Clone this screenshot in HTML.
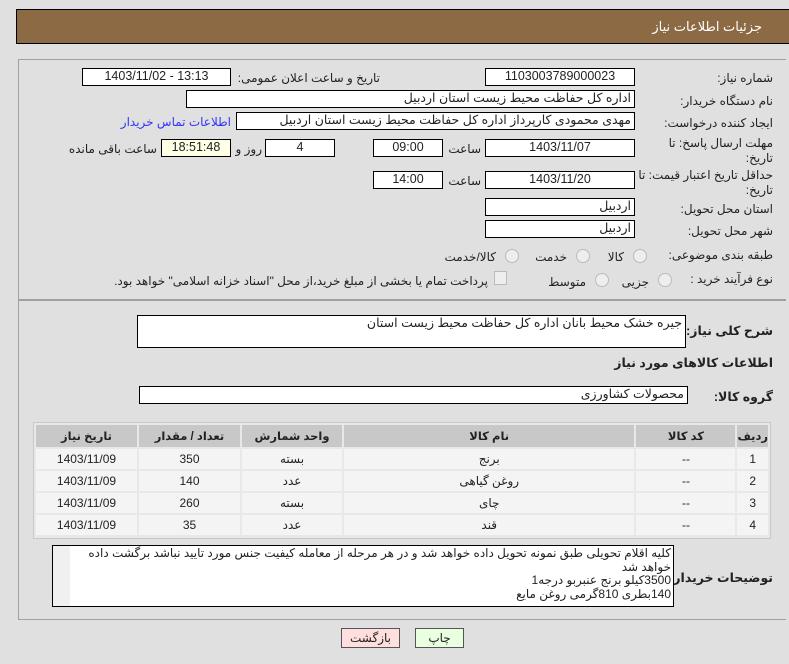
<!DOCTYPE html>
<html><head><meta charset="utf-8"><style>
body{margin:0;width:789px;height:664px;background:#e0e0e0;font-family:"Liberation Sans","DejaVu Sans",sans-serif;font-size:12px;color:#222;position:relative;overflow:hidden}
.a{position:absolute}
.box{position:absolute;background:#fff;border:1px solid #000;box-sizing:border-box;font-size:12.5px;line-height:15px;white-space:nowrap;overflow:hidden}
.c{text-align:center}.r{text-align:right;padding-right:3px;direction:rtl}
.l{position:absolute;direction:rtl;text-align:right;white-space:nowrap;font-size:12px}
table{border-collapse:separate;border-spacing:2px;font-size:12px}
td,th{text-align:center;height:20px;padding:0}
th{background:#c8c8c8;height:22px;font-weight:bold;font-size:11.5px}
td{background:#f4f4f4}
.rad{position:absolute;width:12px;height:12px;border:1px solid #bbb;border-radius:50%;background:#eee}
</style></head><body>
<div class="a" style="left:16px;top:9px;width:775px;height:35px;background:#8c6a43;border:1px solid #000;box-sizing:border-box"></div>
<div class="l" style="right:27px;top:19px;color:#fff;font-size:13px">جزئیات اطلاعات نیاز</div>
<div class="a" style="left:18px;top:59px;width:767px;height:239px;border:1px solid #a0a0a0;border-right:none"></div>
<div class="a" style="left:18px;top:300px;width:767px;height:318px;border:1px solid #a0a0a0;border-right:none"></div>

<div class="l" style="right:16px;top:71px">شماره نیاز:</div>
<div class="box c" style="left:485px;top:68px;width:150px;height:18px">1103003789000023</div>
<div class="l" style="right:409px;top:71px">تاریخ و ساعت اعلان عمومی:</div>
<div class="box c" style="left:82px;top:68px;width:149px;height:18px">1403/11/02 - 13:13</div>

<div class="l" style="right:16px;top:94px">نام دستگاه خریدار:</div>
<div class="box r" style="left:186px;top:90px;width:449px;height:18px">اداره کل حفاظت محیط زیست استان اردبیل</div>

<div class="l" style="right:16px;top:116px">ایجاد کننده درخواست:</div>
<div class="box r" style="left:236px;top:112px;width:399px;height:18px">مهدی محمودی کارپرداز اداره کل حفاظت محیط زیست استان اردبیل</div>
<div class="l" style="right:558px;top:115px;color:#3333ff">اطلاعات تماس خریدار</div>

<div class="l" style="right:16px;top:136px;line-height:15px">مهلت ارسال پاسخ: تا<br>تاریخ:</div>
<div class="box c" style="left:485px;top:139px;width:150px;height:18px">1403/11/07</div>
<div class="l" style="right:308px;top:142px">ساعت</div>
<div class="box c" style="left:373px;top:139px;width:70px;height:18px">09:00</div>
<div class="box c" style="left:265px;top:139px;width:70px;height:18px">4</div>
<div class="l" style="right:527px;top:142px">روز و</div>
<div class="box c" style="left:161px;top:139px;width:70px;height:18px;background:#ffffe6">18:51:48</div>
<div class="l" style="right:632px;top:142px">ساعت باقی مانده</div>

<div class="l" style="right:16px;top:168px;line-height:15px">حداقل تاریخ اعتبار قیمت: تا<br>تاریخ:</div>
<div class="box c" style="left:485px;top:171px;width:150px;height:18px">1403/11/20</div>
<div class="l" style="right:308px;top:174px">ساعت</div>
<div class="box c" style="left:373px;top:171px;width:70px;height:18px">14:00</div>

<div class="l" style="right:16px;top:202px">استان محل تحویل:</div>
<div class="box r" style="left:485px;top:198px;width:150px;height:18px">اردبیل</div>
<div class="l" style="right:16px;top:224px">شهر محل تحویل:</div>
<div class="box r" style="left:485px;top:220px;width:150px;height:18px">اردبیل</div>

<div class="l" style="right:16px;top:248px">طبقه بندی موضوعی:</div>
<div class="rad" style="left:633px;top:249px"></div><div class="l" style="right:165px;top:250px">کالا</div>
<div class="rad" style="left:576px;top:249px"></div><div class="l" style="right:222px;top:250px">خدمت</div>
<div class="rad" style="left:505px;top:249px"></div><div class="l" style="right:293px;top:250px">کالا/خدمت</div>

<div class="l" style="right:16px;top:272px">نوع فرآیند خرید :</div>
<div class="rad" style="left:658px;top:273px"></div><div class="l" style="right:140px;top:275px">جزیی</div>
<div class="rad" style="left:595px;top:273px"></div><div class="l" style="right:203px;top:275px">متوسط</div>
<div class="a" style="left:494px;top:271px;width:11px;height:12px;border:1px solid #bbb;background:#eee"></div>
<div class="l" style="right:301px;top:274px">پرداخت تمام یا بخشی از مبلغ خرید،از محل "اسناد خزانه اسلامی" خواهد بود.</div>

<div class="l" style="right:16px;top:323px;font-weight:bold;font-size:12.5px">شرح کلی نیاز:</div>
<div class="box r" style="left:137px;top:315px;width:549px;height:33px">جیره خشک محیط بانان اداره کل حفاظت محیط زیست استان</div>
<div class="l" style="right:16px;top:355px;font-weight:bold;font-size:12.5px">اطلاعات کالاهای مورد نیاز</div>
<div class="l" style="right:16px;top:389px;font-weight:bold;font-size:12.5px">گروه کالا:</div>
<div class="box r" style="left:139px;top:386px;width:549px;height:18px">محصولات کشاورزی</div>

<div class="a" style="left:33px;top:422px;width:738px;height:117px;border:1px solid #c8c8c8;box-sizing:border-box;background:#e8e8e8">
<table dir="rtl" style="width:100%">
<tr><th style="width:27px">ردیف</th><th style="width:99px">کد کالا</th><th>نام کالا</th><th style="width:100px">واحد شمارش</th><th style="width:101px">تعداد / مقدار</th><th style="width:101px">تاریخ نیاز</th></tr>
<tr><td>1</td><td>--</td><td>برنج</td><td>بسته</td><td>350</td><td>1403/11/09</td></tr>
<tr><td>2</td><td>--</td><td>روغن گیاهی</td><td>عدد</td><td>140</td><td>1403/11/09</td></tr>
<tr><td>3</td><td>--</td><td>چای</td><td>بسته</td><td>260</td><td>1403/11/09</td></tr>
<tr><td>4</td><td>--</td><td>قند</td><td>عدد</td><td>35</td><td>1403/11/09</td></tr>
</table></div>

<div class="l" style="right:16px;top:570px;font-weight:bold;font-size:12.5px">توضیحات خریدار:</div>
<div class="box" style="left:52px;top:545px;width:622px;height:62px;white-space:normal">
<div style="position:absolute;left:0;top:0;width:17px;height:60px;background:#f0f0f0"></div>
<div style="position:absolute;right:2px;left:19px;top:1px;direction:rtl;text-align:right;font-size:12px;line-height:13.5px">کلیه اقلام تحویلی طبق نمونه تحویل داده خواهد شد و در هر مرحله از معامله کیفیت جنس مورد تایید نباشد برگشت داده خواهد شد<br>3500کیلو برنج عنبربو درجه1<br>140بطری 810گرمی روغن مایع</div>
</div>

<div class="a c" style="left:341px;top:628px;width:59px;height:20px;background:#ffdede;border:1px solid #555;box-sizing:border-box;line-height:18px">بازگشت</div>
<div class="a c" style="left:415px;top:628px;width:49px;height:20px;background:#e8ffe0;border:1px solid #555;box-sizing:border-box;line-height:18px">چاپ</div>
</body></html>
